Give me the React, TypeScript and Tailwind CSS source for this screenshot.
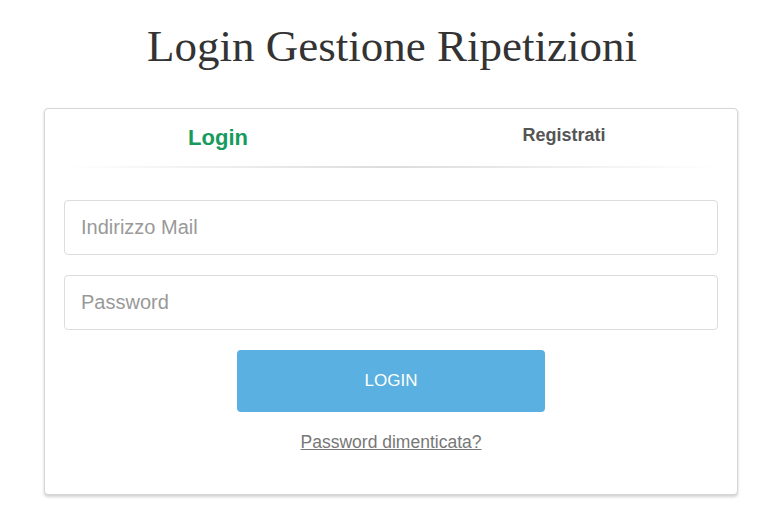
const App = () => {
  return (
    <div className="min-h-screen bg-white pt-[18px]" style={{ fontFamily: '"Liberation Sans", Arial, sans-serif' }}>
      <h1 className="text-center text-[45px] leading-[56px] text-[#333] font-normal" style={{ fontFamily: '"Liberation Serif", "Times New Roman", serif' }}>
        Login Gestione Ripetizioni
      </h1>
      <div className="ml-[44px] mr-[46px] mt-[34px] bg-white border border-[#d6d6d6] rounded-[4px] shadow-[0_2px_3px_rgba(0,0,0,0.18)] pb-[39px]">
        <div className="flex">
          <div className="flex-1 pt-[12px] text-center text-[22px] font-bold text-[#179a5d]">Login</div>
          <div className="flex-1 pt-[13px] text-center text-[18px] font-bold text-[#555]">Registrati</div>
        </div>
        <div className="px-[19px]">
          <div className="mt-[12px] h-[2px] bg-gradient-to-r from-transparent via-[#dcdcdc] to-transparent" />
          <div className="mt-[32px] flex flex-col gap-[20px]">
            <input
              className="h-[55px] w-full rounded-[4px] border border-[#dcdcdc] px-[16px] text-[20px] text-[#333] placeholder:text-[#999] outline-none"
              placeholder="Indirizzo Mail"
            />
            <input
              type="password"
              className="h-[55px] w-full rounded-[4px] border border-[#dcdcdc] px-[16px] text-[20px] text-[#333] placeholder:text-[#999] outline-none"
              placeholder="Password"
            />
          </div>
          <div className="mt-[20px] flex justify-center">
            <button className="h-[62px] w-[308px] rounded-[4px] bg-[#5ab0e0] text-[17px] text-white">LOGIN</button>
          </div>
          <div className="mt-[17px] text-center">
            <a href="#" className="text-[17.5px] text-[#777] underline">Password dimenticata?</a>
          </div>
        </div>
      </div>
    </div>
  );
};

export default App;
